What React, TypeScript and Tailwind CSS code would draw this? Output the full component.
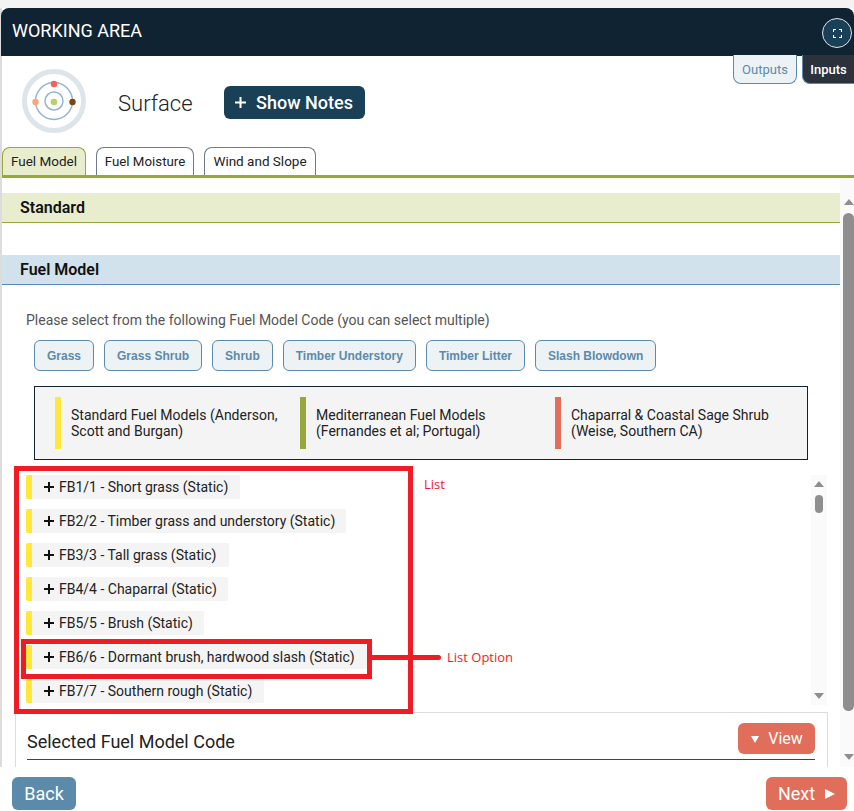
const fuels = [
  { t: "FB1/1 - Short grass (Static)", w: "w-[214px]" },
  { t: "FB2/2 - Timber grass and understory (Static)", w: "w-[320px]" },
  { t: "FB3/3 - Tall grass (Static)", w: "w-[203px]" },
  { t: "FB4/4 - Chaparral (Static)", w: "w-[202px]" },
  { t: "FB5/5 - Brush (Static)", w: "w-[178px]" },
  { t: "FB6/6 - Dormant brush, hardwood slash (Static)", w: "w-[342px]" },
  { t: "FB7/7 - Southern rough (Static)", w: "w-[238px]" },
];
const chips = ["Grass", "Grass Shrub", "Shrub", "Timber Understory", "Timber Litter", "Slash Blowdown"];
const legend = [
  { c: "bg-[#ffe838]", w: "w-[245px]", a: "Standard Fuel Models (Anderson,", b: "Scott and Burgan)" },
  { c: "bg-[#97a73a]", w: "w-[255px]", a: "Mediterranean Fuel Models", b: "(Fernandes et al; Portugal)" },
  { c: "bg-[#e06e5a]", w: "w-[240px]", a: "Chaparral & Coastal Sage Shrub", b: "(Weise, Southern CA)" },
];

function Logo() {
  return (
    <svg width="64" height="64" viewBox="0 0 64 64">
      <circle cx="32" cy="32" r="29.5" fill="#fff" stroke="#dde5ea" strokeWidth="5" />
      <circle cx="32" cy="32" r="18.5" fill="none" stroke="#94b5d2" strokeWidth="1.5" />
      <circle cx="32" cy="32" r="9" fill="none" stroke="#94b5d2" strokeWidth="1.5" />
      <circle cx="32" cy="33" r="3.3" fill="#b9cf6b" />
      <circle cx="32" cy="15" r="3.2" fill="#ff5c5c" />
      <circle cx="13.5" cy="33" r="3.2" fill="#ffa47a" />
      <circle cx="50.5" cy="33" r="3.2" fill="#7b4412" />
    </svg>
  );
}

function Plus() {
  return (
    <svg width="10" height="10" viewBox="0 0 10 10" className="shrink-0">
      <path d="M5 0v10M0 5h10" stroke="#111" strokeWidth="2" />
    </svg>
  );
}

function Arrow({ up, className }: { up?: boolean; className?: string }) {
  return (
    <svg width="10" height="6" viewBox="0 0 10 6" className={className}>
      <path d={up ? "M5 0l5 6H0z" : "M0 0h10L5 6z"} fill="#8e8e8e" />
    </svg>
  );
}

export default function App() {
  return (
    <div className="relative h-[811px] w-[854px] overflow-hidden bg-white font-['Roboto',sans-serif] text-[14px] text-[#222]">
      <div className="h-2 bg-[#f3f3f3]" />
      <div className="h-[759px] flex flex-col border-l-2 border-[#dcdcdc]">
        <header className="flex h-[48px] shrink-0 items-start justify-between rounded-t-[8px] bg-[#102332] pl-[11px] pr-[2px] -ml-[1px]">
          <span className="mt-[11px] text-[18px] leading-[24px] font-normal text-white">WORKING AREA</span>
          <button className="mt-[10px] flex h-[30px] w-[30px] items-center justify-center rounded-full border border-[#dfe6ea] bg-[#1a4058]">
            <svg width="9" height="9" viewBox="0 0 9 9">
              <path d="M.5 3V.5H3M6 .5h2.500V3M8.500 6v2.500H6M3 8.500H.5V6" fill="none" stroke="#fff" strokeWidth="1.100" />
            </svg>
          </button>
        </header>

        <div className="flex h-[91px] shrink-0 items-start justify-between">
          <div className="flex items-start">
            <div className="ml-[20px] mt-[13px]"><Logo /></div>
            <span className="ml-[32px] mt-[34px] text-[22px] leading-[28px] font-light text-[#222]">Surface</span>
            <button className="ml-[31px] mt-[30px] flex h-[33px] w-[141px] items-center justify-center gap-[10px] rounded-[6px] bg-[#1a4058] text-[18px] font-medium text-white">
              <svg width="11" height="11" viewBox="0 0 11 11"><path d="M5.500 0v11M0 5.500h11" stroke="#fff" strokeWidth="2" /></svg>
              Show Notes
            </button>
          </div>
          <div className="-mt-[1px] flex gap-[5px]">
            <button className="h-[29px] w-[64px] rounded-b-[8px] border border-t-0 border-[#5b8aab] bg-[#edf2f5] pt-[1px] text-[13px] text-[#5b8aab]">Outputs</button>
            <button className="h-[29px] w-[52px] rounded-bl-[8px] border-b border-l border-[#5b8aab] bg-[#2b323b] pt-[1px] text-[13px] font-medium text-white">Inputs</button>
          </div>
        </div>

        <nav className="flex h-[31px] shrink-0 items-end gap-[10px] border-b-[3px] border-[#97a73a]">
          <button className="h-[28px] w-[84px] rounded-t-[8px] border border-b-0 border-[#97a73a] bg-[#e8eecd] text-[13.500px] text-[#222]">Fuel Model</button>
          <button className="h-[28px] w-[98px] rounded-t-[8px] border border-b-0 border-[#6c7a89] bg-white text-[13.300px] text-[#222]">Fuel Moisture</button>
          <button className="h-[28px] w-[112px] rounded-t-[8px] border border-b-0 border-[#6c7a89] bg-white text-[13.500px] text-[#222]">Wind and Slope</button>
        </nav>

        <div className="flex min-h-0 flex-1">
          <main className="min-w-0 flex-1 overflow-hidden pt-[15px]">
            <div className="flex h-[30px] items-center border-b border-[#97a73a] bg-[#e8eecd] pl-[18px] text-[16px] font-semibold text-[#111]">Standard</div>
            <div className="mt-[32px] flex h-[30px] items-center border-b border-[#5b8aab] bg-[#d2e2ec] pl-[18px] text-[16px] font-semibold text-[#111]">Fuel Model</div>
            <p className="ml-[24px] mt-[25px] h-[20px] leading-[20px] text-[#555]">Please select from the following Fuel Model Code (you can select multiple)</p>
            <div className="ml-[32px] mt-[10px] flex gap-[10px]">
              {chips.map((c) => (
                <button key={c} className="h-[31px] rounded-[6px] border border-[#5b8aab] bg-[#edf2f5] px-[12px] pt-[1px] font-['Liberation_Sans',sans-serif] text-[12px] font-bold text-[#5b8aab]">{c}</button>
              ))}
            </div>
            <div className="ml-[32px] mt-[15px] flex h-[74px] w-[774px] items-center border border-[#102332] bg-[#f4f4f4] pl-[20px]">
              {legend.map((l) => (
                <div key={l.a} className={`flex h-[52px] items-center gap-[10px] ${l.w}`}>
                  <span className={`h-[52px] w-[6px] shrink-0 ${l.c}`} />
                  <span className="leading-[16px] text-[#222]">{l.a}<br />{l.b}</span>
                </div>
              ))}
            </div>
            <div className="mt-[15px] flex h-[230px]">
              <ul className="ml-[24px] flex-1 space-y-[10px]">
                {fuels.map((f) => (
                  <li key={f.t} className={`flex h-[24px] items-center rounded-[2px] border-l-[6px] border-[#ffe838] bg-[#f4f4f4] pl-[12px] ${f.w}`}>
                    <Plus />
                    <span className="ml-[5px] whitespace-nowrap text-[#222]">{f.t}</span>
                  </li>
                ))}
              </ul>
              <div className="mr-[13px] flex h-[230px] w-[16px] flex-col items-center bg-[#fafafa] pt-[6px]">
                <Arrow up />
                <div className="mt-[8px] h-[18px] w-[8px] rounded-full bg-[#8e8e8e]" />
                <Arrow className="mt-auto mb-[6px]" />
              </div>
            </div>
            <section className="relative ml-[13px] mr-[12px] mt-[7px] h-[60px] border border-[#dcdcdc] pl-[11px] pr-[12px] pt-[10px]">
              <div className="flex h-[37px] items-start justify-between border-b border-[#444]">
                <span className="mt-[9px] text-[18px] leading-[20px] text-[#222]">Selected Fuel Model Code</span>
                <button className="flex h-[31px] w-[77px] items-center justify-center gap-[9px] rounded-[6px] bg-[#e06e5a] pl-[1px] text-[16px] text-white">
                  <svg width="8" height="8" viewBox="0 0 8 8"><path d="M0 1h8L4 8z" fill="#fff" /></svg>
                  View
                </button>
              </div>
            </section>
          </main>
          <div className="flex w-[14px] shrink-0 flex-col items-center bg-[#fafafa] pt-[21px] pl-[3px]">
            <Arrow up />
            <div className="mt-[8px] h-[498px] w-[11px] rounded-full bg-[#8e8e8e]" />
            <Arrow className="mt-auto mb-[7px]" />
          </div>
        </div>
      </div>

      <footer className="flex h-[44px] items-start justify-between pl-[12px] pr-[7px] pt-[10px]">
        <button className="h-[33px] w-[64px] rounded-[6px] bg-[#5b8aab] text-[18px] text-white">Back</button>
        <button className="flex h-[33px] w-[81px] items-center justify-center gap-[10px] rounded-[6px] bg-[#e06e5a] text-[18px] text-white">
          Next
          <svg width="10" height="10" viewBox="0 0 10 10"><path d="M0 0l10 5-10 5z" fill="#fff" /></svg>
        </button>
      </footer>

      <div className="pointer-events-none absolute left-[14px] top-[466px] h-[248px] w-[399px] border-[5px] border-[#ee1c25]" />
      <div className="pointer-events-none absolute left-[21px] top-[639px] h-[40px] w-[351px] border-[5px] border-[#ee1c25]" />
      <div className="pointer-events-none absolute left-[372px] top-[655px] h-[5px] w-[69px] rounded-r-full bg-[#ee1c25]" />
      <span className="absolute left-[424px] top-[476px] font-['Open_Sans',sans-serif] text-[13px] leading-[16px] text-[#ee1c25]">List</span>
      <span className="absolute left-[447px] top-[649px] font-['Open_Sans',sans-serif] text-[13px] leading-[16px] text-[#ee1c25]">List Option</span>
    </div>
  );
}
